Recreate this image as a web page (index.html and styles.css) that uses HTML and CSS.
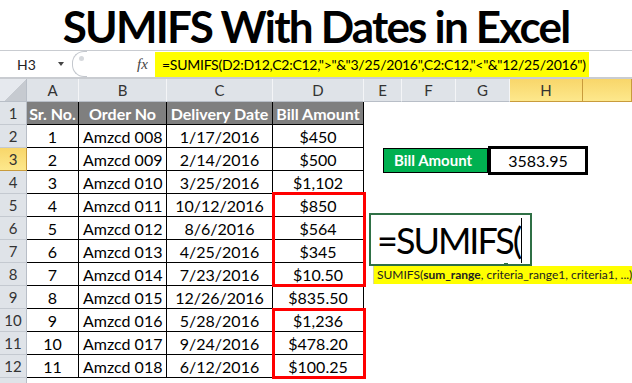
FILE: index.html
```html
<!DOCTYPE html>
<html lang="en">
<head>
  <meta charset="UTF-8" />
  <title>SUMIFS With Dates in Excel</title>
  <link rel="stylesheet" href="styles.css">
</head>
<body>

<div class="title">SUMIFS With Dates in Excel</div>

<div class="fbar">
  <div class="namebox">H3</div>
  <div class="nb-arrow"></div>
  <div class="splitter"><span class="dot"></span></div>
  <div class="fx">fx</div>
  <div class="formula"><span class="hl">=SUMIFS(D2:D12,C2:C12,"&gt;"&amp;"3/25/2016",C2:C12,"&lt;"&amp;"12/25/2016")</span></div>
</div>

<div class="sheet">
  <div class="grid" id="grid"></div>

  <!-- overlays -->
  <div class="red-box box1"></div>
  <div class="red-box box2"></div>

  <div class="result">
    <div class="result-label">Bill Amount</div>
    <div class="result-value">3583.95</div>
  </div>

  <div class="edit-cell">=SUMIFS(<span class="caret"></span><span class="handle"></span></div>
  <div class="tip">SUMIFS(<b>sum_range</b>, criteria_range1, criteria1, ...)</div>
</div>

<script>
  const grid = document.getElementById('grid');
  const cols = ['A', 'B', 'C', 'D', 'E', 'F', 'G', 'H', ''];

  const datos = [
    ['Sr. No.', 'Order No', 'Delivery Date', 'Bill Amount'],
    ['1', 'Amzcd 008', '1/17/2016', '$450'],
    ['2', 'Amzcd 009', '2/14/2016', '$500'],
    ['3', 'Amzcd 010', '3/25/2016', '$1,102'],
    ['4', 'Amzcd 011', '10/12/2016', '$850'],
    ['5', 'Amzcd 012', '8/6/2016', '$564'],
    ['6', 'Amzcd 013', '4/25/2016', '$345'],
    ['7', 'Amzcd 014', '7/23/2016', '$10.50'],
    ['8', 'Amzcd 015', '12/26/2016', '$835.50'],
    ['9', 'Amzcd 016', '5/28/2016', '$1,236'],
    ['10', 'Amzcd 017', '9/24/2016', '$478.20'],
    ['11', 'Amzcd 018', '6/12/2016', '$100.25']
  ];

  function celda(texto, clases) {
    const div = document.createElement('div');
    div.className = 'c ' + clases;
    div.textContent = texto;
    grid.appendChild(div);
  }

  celda('', 'corner');
  cols.forEach(function(c) {
    celda(c, 'colhead' + (c === 'H' || c === '' ? ' sel' : ''));
  });

  for (let r = 1; r <= 13; r++) {
    celda(r === 13 ? '' : r, 'rowhead' + (r === 3 ? ' sel' : ''));
    const fila = datos[r - 1];
    for (let i = 0; i < 9; i++) {
      if (fila && i < 4) {
        const tipo = r === 1 ? 'd hd' : 'd' + (i === 1 ? ' left' : '');
        celda(fila[i], tipo);
      } else {
        celda('', 'empty');
      }
    }
  }
</script>

</body>
</html>
```

FILE: styles.css
```css
body {
  margin: 0;
  width: 632px;
  height: 383px;
  overflow: hidden;
  background: #fff;
  color: #000;
  font-family: Lato, "Liberation Sans", sans-serif;
}

.title {
  height: 50px;
  text-align: center;
  font-size: 44px;
  font-weight: 700;
  line-height: 52px;
  letter-spacing: -1.8px;
}

/* formula bar */
.fbar {
  height: 29px;
  box-sizing: border-box;
  display: flex;
  align-items: center;
  border-top: 1px solid #c9ccd1;
  border-bottom: 2px solid #c9ccd1;
  font-size: 14px;
}

.namebox {
  width: 58px;
  padding-left: 17px;
  box-sizing: border-box;
  color: #222;
}

.nb-arrow {
  width: 0;
  height: 0;
  border-left: 3px solid transparent;
  border-right: 3px solid transparent;
  border-top: 4px solid #444;
  margin-right: 8px;
}

.splitter {
  width: 14px;
  height: 24px;
  border: 1px solid #c4c8ce;
  border-right: none;
  border-radius: 12px 0 0 12px;
  position: relative;
}

.splitter .dot {
  position: absolute;
  left: 6px;
  top: 4px;
  width: 5px;
  height: 5px;
  border-radius: 50%;
  background: #d6d9dd;
}

.fx {
  margin-left: 50px;
  width: 18px;
  font-family: "Liberation Serif", serif;
  font-style: italic;
  font-size: 15px;
  color: #444;
}

.formula {
  flex: 1;
  align-self: stretch;
  display: flex;
  align-items: stretch;
  padding-top: 1px;
}

.hl {
  background: #ffff00;
  width: 427px;
  padding-left: 7px;
  line-height: 25px;
  font-size: 14px;
  white-space: nowrap;
  letter-spacing: -0.25px;
}

/* sheet */
.sheet {
  position: relative;
}

.grid {
  display: grid;
  grid-template-columns: 27px 52px 88px 106px 91px 38px 54px 54px 73px 1fr;
  grid-auto-rows: 23px;
}

.c {
  box-sizing: border-box;
  display: flex;
  align-items: center;
  justify-content: center;
  white-space: nowrap;
  font-size: 16px;
}

.corner {
  background: linear-gradient(135deg, #e6e9ee 55%, #c6cad0 55%);
  border-right: 1px solid #b8bec7;
  border-bottom: 1px solid #b8bec7;
}

.colhead {
  background: #dfe3e8;
  border-right: 1px solid #f4f5f7;
  border-bottom: 1px solid #b8bec7;
  color: #333;
  font-size: 15px;
}

.rowhead {
  background: #dfe3e8;
  border-right: 1px solid #b8bec7;
  border-bottom: 1px solid #c4c9d0;
  color: #333;
  font-size: 15px;
}

.colhead.sel, .rowhead.sel {
  background: linear-gradient(#f8d66a, #fde88c);
  border-color: #c89b3c;
}

.d {
  border-right: 1px solid #000;
  border-bottom: 1px solid #000;
}

.hd {
  background: #7f7f7f;
  color: #fff;
  font-weight: 700;
}

.left {
  justify-content: flex-start;
  padding-left: 4px;
}

/* overlays */
.red-box {
  position: absolute;
  left: 272px;
  width: 94px;
  box-sizing: border-box;
  border: 3px solid #ff0000;
}

.box1 {
  top: 113px;
  height: 95px;
}

.box2 {
  top: 229px;
  height: 71px;
}

.result {
  position: absolute;
  left: 383px;
  top: 67px;
  display: flex;
  align-items: center;
}

.result-label {
  width: 105px;
  height: 25px;
  box-sizing: border-box;
  border: 1px solid #000;
  background: #00b050;
  color: #fff;
  font-weight: 700;
  font-size: 15px;
  line-height: 23px;
  padding-left: 10px;
}

.result-value {
  width: 100px;
  height: 29px;
  box-sizing: border-box;
  border: 3px solid #000;
  text-align: center;
  font-size: 16px;
  line-height: 23px;
}

.edit-cell {
  position: absolute;
  left: 369px;
  top: 134px;
  width: 163px;
  height: 53px;
  box-sizing: border-box;
  border: 2px solid #2f7045;
  padding-left: 6px;
  font-size: 36px;
  letter-spacing: -2px;
  line-height: 50px;
  white-space: nowrap;
}

.caret {
  position: absolute;
  left: 150px;
  top: 3px;
  width: 1px;
  height: 45px;
  background: #000;
}

.handle {
  position: absolute;
  left: 133px;
  bottom: -3px;
  width: 4px;
  height: 4px;
  background: #2f7045;
}

.tip {
  position: absolute;
  left: 373px;
  top: 187px;
  width: 259px;
  height: 18px;
  box-sizing: border-box;
  background: #ffff00;
  border-left: 1px solid #d8d8a0;
  padding-left: 3px;
  font-size: 12px;
  line-height: 18px;
  white-space: nowrap;
  color: #222;
}
```
